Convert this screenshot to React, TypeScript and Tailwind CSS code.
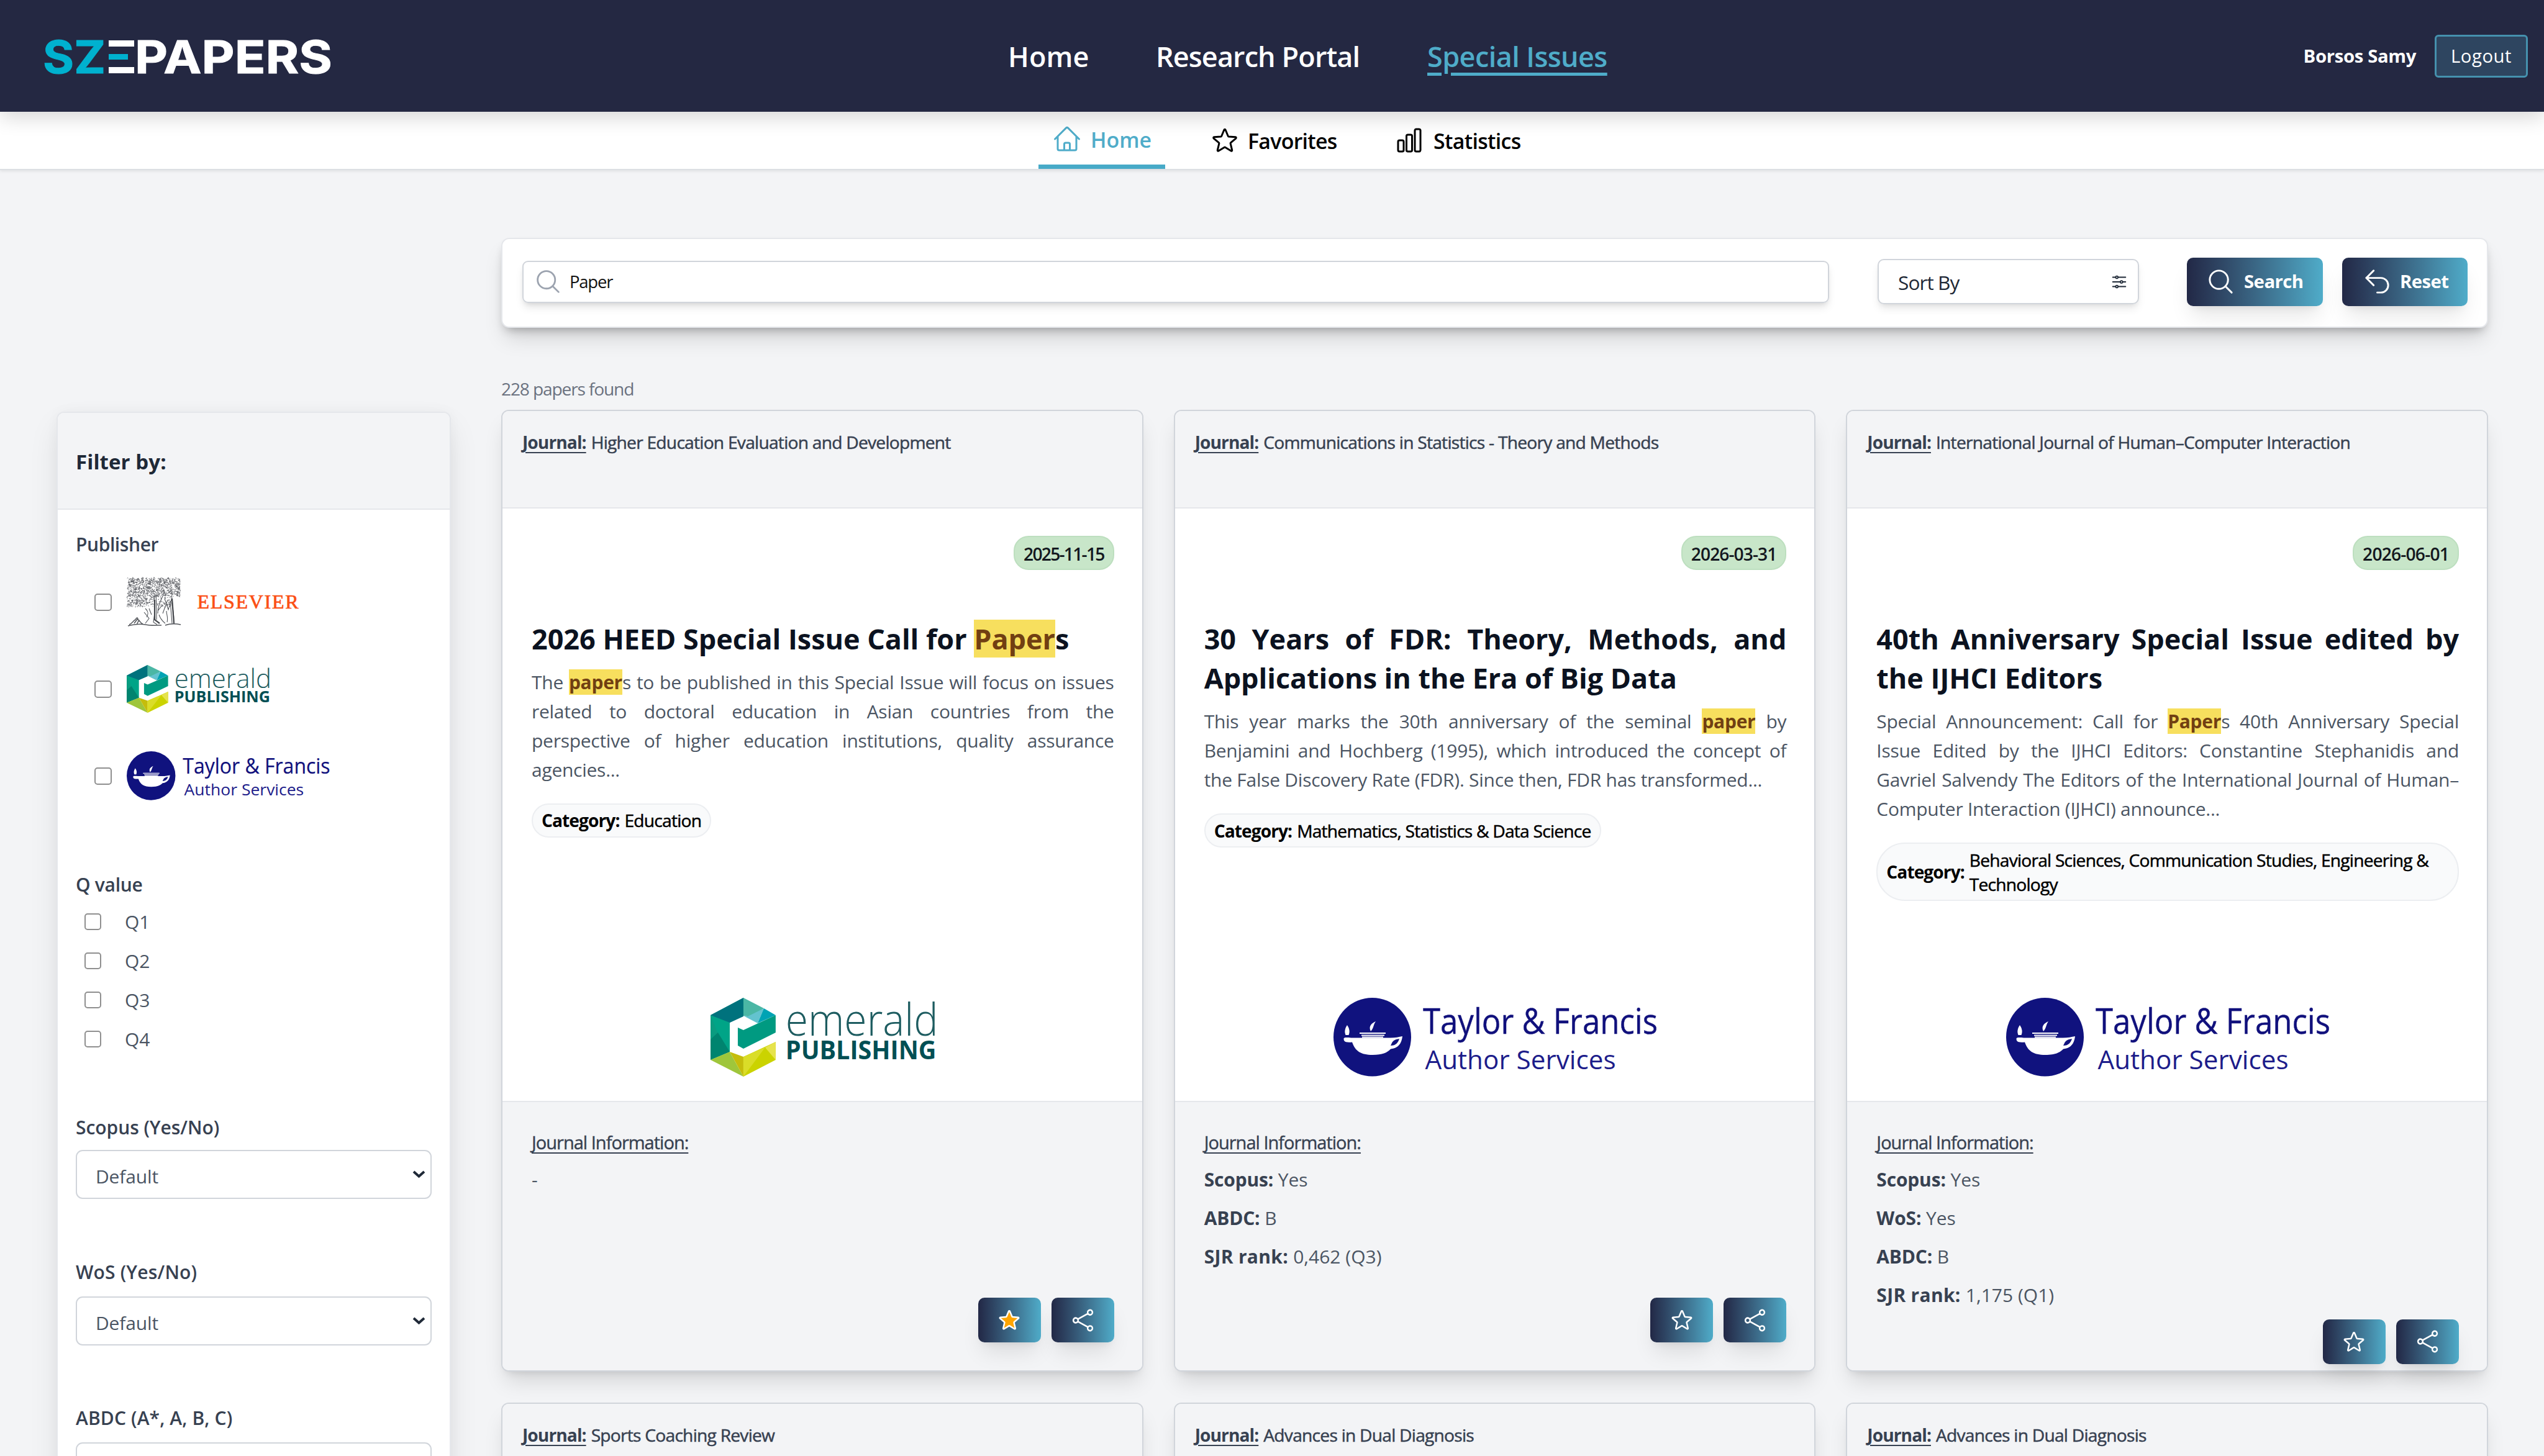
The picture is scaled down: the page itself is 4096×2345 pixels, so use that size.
import type { ReactNode } from 'react'
import {
  HiOutlineHome,
  HiOutlineStar,
  HiOutlineChartBar,
  HiOutlineMagnifyingGlass,
  HiOutlineArrowUturnLeft,
  HiOutlineAdjustmentsHorizontal,
  HiOutlineShare,
} from 'react-icons/hi2'

const SANS = "font-['Open_Sans','Noto_Sans',sans-serif]"

function SzePapersLogo() {
  return (
    <svg className="h-[53px] w-[463px] overflow-visible" viewBox="0 0 463 53">
      <text x="-4" y="53" fontSize="73" fontWeight="700" textLength="101" lengthAdjust="spacingAndGlyphs" fill="#00b1cf" stroke="#00b1cf" strokeWidth="1" fontFamily="Inter">
        SZ
      </text>
      <rect x="102" width="41" height="10" fill="#fff" />
      <rect x="102" y="22" width="31" height="9" fill="#00b1cf" />
      <rect x="102" y="43" width="41" height="10" fill="#fff" />
      <text x="144" y="53" fontSize="73" fontWeight="700" textLength="318" lengthAdjust="spacingAndGlyphs" fill="#fff" stroke="#fff" strokeWidth="1" fontFamily="Inter">
        PAPERS
      </text>
    </svg>
  )
}

function EmeraldLogo({ className }: { className: string }) {
  return (
    <svg className={`overflow-visible ${className}`} viewBox="0 0 362.5 127" preserveAspectRatio="none">
      <polygon points="0,28 53,0 53,29 31,40 31,87 0,100" fill="#00a487" />
      <polygon points="0,28 12,58 0,67" fill="#0a9c80" />
      <polygon points="0,67 12,56 31,87 0,100" fill="#00846f" />
      <polygon points="0,28 53,0 53,30 31,40" fill="#00727d" />
      <polygon points="53,0 86,17 66,31 53,29" fill="#4bb7a5" />
      <polygon points="60,30 86,17 76,41 53,29" fill="#63c3cf" />
      <polygon points="86,17 105,28 76,41" fill="#00a3b4" />
      <polygon points="105,28 105,56 53,82 44,77 44,48 53,52" fill="#009a81" />
      <polygon points="0,100 31,87 53,127" fill="#9fc63b" />
      <polygon points="31,87 53,95 53,127" fill="#c5bd0b" />
      <polygon points="53,95 105,71 105,100 53,127" fill="#cbd300" />
      <polygon points="53,95 88,80 53,127" fill="#dadd28" />
      <polygon points="88,80 105,71 105,100" fill="#e6e34d" />
      <text x="121" y="60.500" fontSize="71" fontWeight="300" textLength="246" lengthAdjust="spacingAndGlyphs" fill="#1d5c60" fontFamily="Open Sans">
        emerald
      </text>
      <text x="121" y="99.500" fontSize="40.5" fontWeight="700" textLength="243" lengthAdjust="spacingAndGlyphs" fill="#004f54" fontFamily="Open Sans">
        PUBLISHING
      </text>
    </svg>
  )
}

function TaylorFrancisLogo({ className }: { className: string }) {
  return (
    <svg className={`overflow-visible ${className}`} viewBox="0 0 521 127" preserveAspectRatio="none">
      <ellipse cx="62.5" cy="63.3" rx="62.5" ry="63.3" fill="#10127e" />
      <path
        d="M16.5 66c0-2 3-2.500 12-1.500h63c8 0 14-1.500 19.500-2.500-1 8-4 19-19 20.500-6 6-13 9.500-29 9.500-19 0-28-6-33-20.500-6 .5-11 .2-12-1.500-1-1-1.500-2-1.500-4z"
        fill="#fff"
      />
      <path d="M92 77c3-5 2-9 14-11-2 6-5 11-14 11z" fill="#10127e" />
      <path d="M42 57h42M45 60.500h37M46 63.500h34" stroke="#fff" strokeWidth="1.900" />
      <path d="M22 44c4 6 4.500 11 2.500 16h-5c-2-5-1.500-10 2.500-16z" fill="#fff" />
      <path d="M60 54c-4-8 1-13 8-16-4 5-3 11-8 16z" fill="#fff" />
      <text x="144" y="57.500" fontSize="56" textLength="378" lengthAdjust="spacingAndGlyphs" fill="#10107c" stroke="#10107c" strokeWidth="0.400" fontFamily="Open Sans">
        Taylor &amp; Francis
      </text>
      <text x="147.500" y="114.500" fontSize="42" textLength="307" lengthAdjust="spacingAndGlyphs" fill="#1c1c8a" fontFamily="Open Sans">
        Author Services
      </text>
    </svg>
  )
}

// Engraved-looking foliage: a deterministic field of short curls.
const leaves = (() => {
  let seed = 7
  const rnd = () => {
    seed = (seed * 16807) % 2147483647
    return seed / 2147483647
  }
  const out: string[] = []
  for (let i = 0; i < 1300; i++) {
    const x = 2 + rnd() * 84
    const y = 1 + rnd() * 46
    if (y > 30 && x > 30 && x < 44 && rnd() > 0.5) continue
    if (y > 30 && x > 72) continue
    if (y > 30 && x > 44 && rnd() > 0.25) continue
    const a = rnd() * 4 - 2
    const b = rnd() * 4 - 2
    out.push(`M${x.toFixed(1)} ${y.toFixed(1)}q${a.toFixed(1)} ${b.toFixed(1)} ${b.toFixed(1)} ${(-a).toFixed(1)}`)
  }
  return out.join('')
})()

function ElsevierLogo() {
  return (
    <svg className="h-[79px] w-[281px] overflow-visible" viewBox="0 0 281 79">
      <path d={leaves} fill="none" stroke="#5c5f64" strokeWidth="0.900" />
      <path
        d="M44 30c2 12 2 26-1 42l6 4M47 28c1 14 1 28 1 40M58 30c-4 8-8 18-8 28M61 34l6 18 6-20M56 46l-6 8M66 36l-8 22M72 40c3 10 4 22 4 34M70 38c1 12 2 24 3 36M52 60c2 6 5 10 10 14M64 54c0 6 3 10 1 18M30 50c4 4 6 8 2 14M28 56l8 10-6 8M36 50l4 10"
        fill="none"
        stroke="#54575c"
        strokeWidth="1.100"
      />
      <path d="M45 36v32l8 6M73 34l3 40" fill="none" stroke="#44474c" strokeWidth="2.200" />
      <path d="M2 78c8-2 18-4 28-2s20 1 26 1M62 77c8-3 16-3 25-1M4 76c4-1 6-6 10-8 2-4 4-4 4 0 4 2 4 6 8 7M12 74l6-8M16 76l4-8" fill="none" stroke="#54575c" strokeWidth="1.500" />
      <text x="113.500" y="50" fontSize="32" textLength="163" fill="#fb4f14" stroke="#fb4f14" strokeWidth="0.700" fontFamily="Liberation Serif">
        ELSEVIER
      </text>
    </svg>
  )
}

function Checkbox({ className }: { className: string }) {
  return <span className={`block shrink-0 rounded-[5px] border-[2.5px] border-[#8f8f8f] bg-white ${className}`} />
}

function Select() {
  return (
    <div className="flex h-[79px] w-[573px] items-center justify-between rounded-[11px] border-2 border-[#d1d5db] bg-white pr-[8px] pl-[30px] text-[30px] tracking-[-0.005em] text-[#4b5563]">
      <span className="mt-[5px]">Default</span>
      <svg className="mb-[2px] h-[14px] w-[21px]" viewBox="0 0 21 14">
        <path d="M2 3l8.500 7.500L19 3" fill="none" stroke="#1f2937" strokeWidth="4" />
      </svg>
    </div>
  )
}

function FilterTitle({ children, className = '' }: { children: ReactNode; className?: string }) {
  return <h3 className={`text-[30px] leading-[42px] font-semibold text-[#374151] ${className}`}>{children}</h3>
}

function Sidebar() {
  return (
    <aside className="mt-[389px] h-[1900px] w-[635px] shrink-0 overflow-visible rounded-[12px] border-2 border-[#e5e7eb] bg-white shadow-[0_22px_50px_-4px_rgba(0,0,0,0.10),0_0_20px_rgba(0,0,0,0.035)]">
      <div className="flex h-[156px] items-center rounded-t-[10px] border-b-2 border-[#e5e7eb] bg-[#f3f4f6] pl-[29px]">
        <h2 className="mt-[4px] text-[33px] leading-[44px] font-bold tracking-[0.003em] text-[#1f2937]">Filter by:</h2>
      </div>
      <div className="pl-[29px]">
        <FilterTitle className="mt-[35px] tracking-[-0.014em]">Publisher</FilterTitle>
        <div className="mt-[32px] flex flex-col gap-[61px] pl-[30px]">
          <div className="flex h-[79px] items-center gap-[24px]">
            <Checkbox className="size-[28px]" />
            <ElsevierLogo />
          </div>
          <div className="flex h-[79px] items-center gap-[24px]">
            <Checkbox className="size-[28px]" />
            <EmeraldLogo className="h-[77px] w-[230px]" />
          </div>
          <div className="flex h-[79px] items-center gap-[24px]">
            <Checkbox className="size-[28px]" />
            <TaylorFrancisLogo className="h-[79px] w-[327px]" />
          </div>
        </div>
        <FilterTitle className="mt-[115px] tracking-[-0.01em]">Q value</FilterTitle>
        <div className="mt-[7px] pl-[14px]">
          {['Q1', 'Q2', 'Q3', 'Q4'].map((q) => (
            <div key={q} className="flex h-[63px] items-center gap-[38px] text-[30px] text-[#4b5563]">
              <Checkbox className="size-[27px]" />
              <span>{q}</span>
            </div>
          ))}
        </div>
        <FilterTitle className="mt-[90px] tracking-[-0.002em]">Scopus (Yes/No)</FilterTitle>
        <div className="mt-[15px]">
          <Select />
        </div>
        <FilterTitle className="mt-[97px] tracking-[0.006em]">WoS (Yes/No)</FilterTitle>
        <div className="mt-[18px]">
          <Select />
        </div>
        <FilterTitle className="mt-[96px] tracking-[0.004em]">ABDC (A*, A, B, C)</FilterTitle>
        <div className="mt-[18px]">
          <Select />
        </div>
      </div>
    </aside>
  )
}

function Mark({ children }: { children: ReactNode }) {
  return <mark className="bg-[#f7df5e] font-bold text-[#713f12]">{children}</mark>
}

function CardHeader({ journal }: { journal: string }) {
  return (
    <div className="h-[157px] rounded-t-[10px] border-b-2 border-[#e5e7eb] bg-[#f3f4f6] pt-[30px] pl-[32px] text-[28.2px] leading-[40px] text-[#374151]">
      <span className="font-bold tracking-[-0.034em] underline decoration-[2px] underline-offset-[5px]">Journal:</span>
      <span className="ml-[8px] font-medium tracking-[-0.027em] [-webkit-text-stroke:0.5px_#374151]">{journal}</span>
    </div>
  )
}

const BUTTON = 'bg-gradient-to-r from-[#222846] to-[#4facc9] text-white shadow-[0_22px_34px_-7px_rgba(0,0,0,0.10),0_9px_14px_-9px_rgba(0,0,0,0.10)]'
const CARD = 'rounded-[12px] border-2 border-[#d1d5db] shadow-[0_22px_34px_-7px_rgba(0,0,0,0.13),0_9px_14px_-9px_rgba(0,0,0,0.13)]'

type Paper = {
  journal: string
  date: string
  dateClass: string
  title: ReactNode
  text: ReactNode
  category: string
  logo: ReactNode
  info: [string, string][]
  favorite?: boolean
}

function Card({ p }: { p: Paper }) {
  return (
    <article className={`flex h-[1549px] flex-col bg-white ${CARD}`}>
      <CardHeader journal={p.journal} />
      <div className="flex h-[954px] flex-col pt-[44px] pr-[45px] pb-[39px] pl-[47px]">
        <div className={`flex h-[55px] items-center self-end rounded-[24px] border-2 border-[#bddfbf] bg-[#c8e6c9] px-[14px] text-[28.2px] leading-[40px] font-semibold text-[#14181f] ${p.dateClass}`}>
          <span className="mt-[3px]">{p.date}</span>
        </div>
        <h2 className="mt-[79px] text-justify text-[45px] leading-[63.300px] font-bold tracking-[-0.001em] text-[#0b1220]">{p.title}</h2>
        <p className="mt-[14.500px] text-justify text-[30px] leading-[47px] tracking-[-0.009em] text-[#4b5563]">{p.text}</p>
        <div className="mt-[31px] flex items-center self-start rounded-[46px] border-2 border-[#eceef1] bg-[#f9fafb] px-[14px] py-[5.500px] text-[28.2px] leading-[39px] text-black">
          <span className="mt-[1px] font-bold tracking-[-0.034em]">Category:</span>
          <span className="mt-[1px] ml-[8px] font-medium tracking-[-0.028em] [-webkit-text-stroke:0.5px_#000]">{p.category}</span>
        </div>
        <div className="mt-auto flex justify-center">{p.logo}</div>
      </div>
      <div className="flex flex-1 flex-col rounded-b-[10px] border-t-2 border-[#e5e7eb] bg-[#f3f4f6] pt-[43px] pr-[45px] pl-[47px] text-[#374151]">
        <h4 className="text-[29px] leading-[44px] font-medium tracking-[-0.034em] underline decoration-[2px] underline-offset-[5px] [-webkit-text-stroke:0.4px_#374151]">
          Journal Information:
        </h4>
        <div className="mt-[7px] min-h-[213px] text-[30px] leading-[61.900px]">
          {p.info.map(([k, v]) => (
            <div key={k + v}>
              {k && <b className={k === 'SJR rank:' ? 'tracking-[0.01em]' : 'tracking-[-0.006em]'}>{k} </b>}
              <span className="text-[#4b5563]">{v}</span>
            </div>
          ))}
        </div>
        <div className="mt-[8px] flex gap-[17px] self-end">
          <button className={`flex h-[72px] w-[101px] items-center justify-center rounded-[10px] ${BUTTON}`}>
            <HiOutlineStar className={p.favorite ? 'size-[40px] fill-[#ffa500]' : 'size-[40px]'} />
          </button>
          <button className={`flex h-[72px] w-[101px] items-center justify-center rounded-[10px] ${BUTTON}`}>
            <HiOutlineShare className="size-[41px]" />
          </button>
        </div>
      </div>
    </article>
  )
}

const papers: Paper[] = [
  {
    journal: 'Higher Education Evaluation and Development',
    date: '2025-11-15',
    dateClass: 'tracking-[-0.062em]',
    title: (
      <>
        2026 HEED Special Issue Call for <Mark>Paper</Mark>s
      </>
    ),
    text: (
      <>
        The <Mark>paper</Mark>s to be published in this Special Issue will focus on issues related to doctoral education in Asian countries from the
        perspective of higher education institutions, quality assurance agencies...
      </>
    ),
    category: 'Education',
    logo: <EmeraldLogo className="h-[127px] w-[362px]" />,
    info: [['', '-']],
    favorite: true,
  },
  {
    journal: 'Communications in Statistics - Theory and Methods',
    date: '2026-03-31',
    dateClass: 'tracking-[-0.034em]',
    title: '30 Years of FDR: Theory, Methods, and Applications in the Era of Big Data',
    text: (
      <>
        This year marks the 30th anniversary of the seminal <Mark>paper</Mark> by Benjamini and Hochberg (1995), which introduced the concept of
        the False Discovery Rate (FDR). Since then, FDR has transformed...
      </>
    ),
    category: 'Mathematics, Statistics & Data Science',
    logo: <TaylorFrancisLogo className="h-[127px] w-[521px]" />,
    info: [
      ['Scopus:', 'Yes'],
      ['ABDC:', 'B'],
      ['SJR rank:', '0,462 (Q3)'],
    ],
  },
  {
    journal: 'International Journal of Human–Computer Interaction',
    date: '2026-06-01',
    dateClass: 'tracking-[-0.029em]',
    title: '40th Anniversary Special Issue edited by the IJHCI Editors',
    text: (
      <>
        Special Announcement: Call for <Mark>Paper</Mark>s 40th Anniversary Special Issue Edited by the IJHCI Editors: Constantine Stephanidis and
        Gavriel Salvendy The Editors of the International Journal of Human–Computer Interaction (IJHCI) announce...
      </>
    ),
    category: 'Behavioral Sciences, Communication Studies, Engineering & Technology',
    logo: <TaylorFrancisLogo className="h-[127px] w-[521px]" />,
    info: [
      ['Scopus:', 'Yes'],
      ['WoS:', 'Yes'],
      ['ABDC:', 'B'],
      ['SJR rank:', '1,175 (Q1)'],
    ],
  },
]

function SearchBar() {
  return (
    <div className="flex h-[145px] items-center rounded-[13px] border-2 border-[#e5e7eb] bg-white pr-[31px] pl-[32px] shadow-[0_22px_34px_-7px_rgba(0,0,0,0.15),0_9px_16px_-7px_rgba(0,0,0,0.30)]">
      <div className="mt-[-4px] flex h-[68px] w-[2104px] items-center rounded-[9px] border-2 border-[#d1d5db] pl-[17px] shadow-[0_9px_14px_-2px_rgba(0,0,0,0.10),0_4px_9px_-4px_rgba(0,0,0,0.12)]">
        <HiOutlineMagnifyingGlass className="size-[45px] text-[#9ca3af]" />
        <span className="mt-[1px] ml-[12px] text-[27.500px] tracking-[-0.045em] text-[#111]">Paper</span>
      </div>
      <div className="mt-[-4px] ml-[78px] flex h-[73px] w-[421px] items-center justify-between rounded-[10px] border-2 border-[#d1d5db] pr-[15px] pl-[31px] shadow-[0_9px_14px_-2px_rgba(0,0,0,0.09),0_4px_9px_-4px_rgba(0,0,0,0.09)]">
        <span className="mt-[2px] text-[31.600px] tracking-[-0.03em] text-[#1f2937]">Sort By</span>
        <HiOutlineAdjustmentsHorizontal className="size-[30px] text-[#1f2937]" />
      </div>
      <button className={`mt-[-4px] ml-auto flex h-[78px] w-[219px] items-center rounded-[10px] pl-[31px] ${BUTTON}`}>
        <HiOutlineMagnifyingGlass className="size-[47px]" />
        <span className="ml-[14px] text-[29.300px] font-bold tracking-[-0.018em]">Search</span>
      </button>
      <button className={`mt-[-4px] ml-[31px] flex h-[78px] w-[202px] items-center rounded-[10px] pl-[33px] ${BUTTON}`}>
        <HiOutlineArrowUturnLeft className="size-[47px]" />
        <span className="ml-[13px] text-[29.300px] font-bold tracking-[-0.02em]">Reset</span>
      </button>
    </div>
  )
}

export default function App() {
  return (
    <div className={`flex h-[2345px] w-[4096px] flex-col overflow-hidden bg-[#f3f4f6] ${SANS}`}>
      <header className="relative z-10 flex h-[180px] shrink-0 items-center bg-[#242842] pl-[73px] text-white shadow-[0_9px_30px_rgba(0,0,0,0.16)]">
        <div className="w-[1550px] shrink-0 pt-[2px]">
          <SzePapersLogo />
        </div>
        <nav className="mt-[2px] flex items-center text-[45px] leading-[60px] font-semibold">
          <a className="w-[238px] tracking-[0.002em]">Home</a>
          <a className="w-[437px] tracking-[-0.020em]">Research Portal</a>
          <a className="tracking-[-0.013em] text-[#4facc9] underline decoration-[5px] underline-offset-[9px]">Special Issues</a>
        </nav>
        <div className="ml-auto flex items-center pr-[26px]">
          <span className="mt-[2px] text-[29.300px] font-bold tracking-[-0.012em]">Borsos Samy</span>
          <button className="ml-[30px] flex h-[69px] w-[150px] items-center justify-center rounded-[6px] border-[3px] border-[#4591ae] bg-[#2e4560] pt-[2px] text-[29.300px] font-medium tracking-[0.018em]">
            Logout
          </button>
        </div>
      </header>

      <div className="flex h-[94px] shrink-0 items-start gap-[50px] border-b-2 border-[#dcdfe3] bg-white pl-[1672px] text-[33.900px] leading-[44px] font-semibold shadow-[0_2px_5px_rgba(0,0,0,0.08)]">
        <a className="flex h-[92px] w-[204px] items-center border-b-[7px] border-[#47aac8] pt-[2px] pl-[22px] text-[#4facc9]">
          <HiOutlineHome className="size-[48px]" />
          <span className="mt-[2px] ml-[14px]">Home</span>
        </a>
        <a className="flex h-[92px] items-center pl-[22px] text-black">
          <HiOutlineStar className="size-[48px]" />
          <span className="mt-[2px] ml-[13px] w-[164px] tracking-[-0.021em]">Favorites</span>
        </a>
        <a className="flex h-[92px] items-center pl-[22px] text-black">
          <HiOutlineChartBar className="size-[48px]" />
          <span className="mt-[2px] ml-[15px] tracking-[-0.020em]">Statistics</span>
        </a>
      </div>

      <main className="flex items-start gap-[81px] pl-[91px]">
        <Sidebar />
        <section className="w-[3199px] shrink-0 pt-[109px]">
          <SearchBar />
          <p className="mt-[78px] text-[28.200px] leading-[40px] tracking-[-0.042em] text-[#6b7280]">228 papers found</p>
          <div className="mt-[14px] grid grid-cols-3 gap-x-[49px] gap-y-[50px]">
            {papers.map((p) => (
              <Card key={p.journal} p={p} />
            ))}
            {['Sports Coaching Review', 'Advances in Dual Diagnosis', 'Advances in Dual Diagnosis'].map((j, i) => (
              <article key={i} className={`h-[1549px] bg-white ${CARD}`}>
                <CardHeader journal={j} />
              </article>
            ))}
          </div>
        </section>
      </main>
    </div>
  )
}
